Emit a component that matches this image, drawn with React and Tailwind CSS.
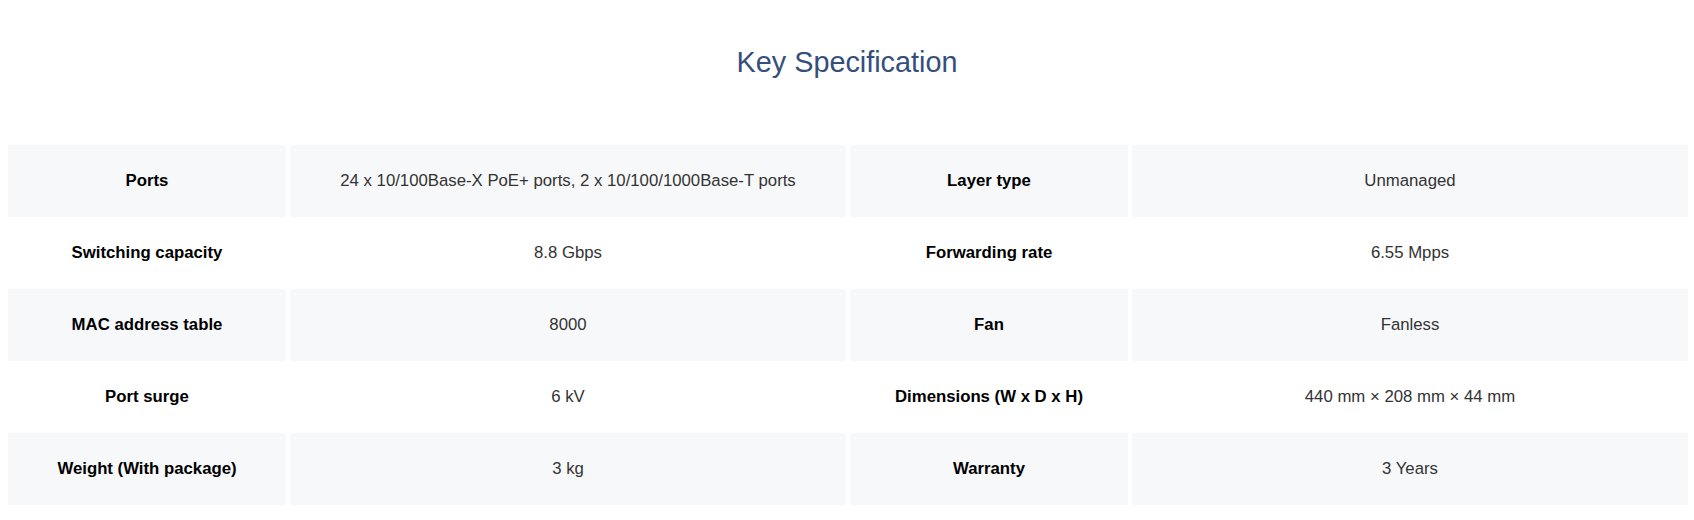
import React from "react";

const rows = [
  ["Ports", "24 x 10/100Base-X PoE+ ports, 2 x 10/100/1000Base-T ports", "Layer type", "Unmanaged"],
  ["Switching capacity", "8.8 Gbps", "Forwarding rate", "6.55 Mpps"],
  ["MAC address table", "8000", "Fan", "Fanless"],
  ["Port surge", "6 kV", "Dimensions (W x D x H)", "440 mm × 208 mm × 44 mm"],
  ["Weight (With package)", "3 kg", "Warranty", "3 Years"],
];

export default function App() {
  return (
    <div className="w-[1694px] h-[520px] bg-white font-['Liberation_Sans',Arial,sans-serif]">
      <h2 className="pt-[46px] text-center text-[28.8px] leading-[32px] text-[#34507a] font-normal">
        Key Specification
      </h2>
      <div className="mt-[67px] pl-2 pr-[6px]">
        {rows.map((r, i) => {
          const bg = i % 2 === 0 ? "bg-[#f7f8fa]" : "bg-white";
          return (
            <div key={i} className="grid grid-cols-[1fr_2fr_1fr_2fr] gap-x-1 h-[72px] text-[16.75px]">
              <div className={`${bg} flex items-center justify-center font-bold text-black`}>{r[0]}</div>
              <div className={`${bg} flex items-center justify-center text-[#333333]`}>{r[1]}</div>
              <div className={`${bg} flex items-center justify-center font-bold text-black`}>{r[2]}</div>
              <div className={`${bg} flex items-center justify-center text-[#333333]`}>{r[3]}</div>
            </div>
          );
        })}
      </div>
    </div>
  );
}
